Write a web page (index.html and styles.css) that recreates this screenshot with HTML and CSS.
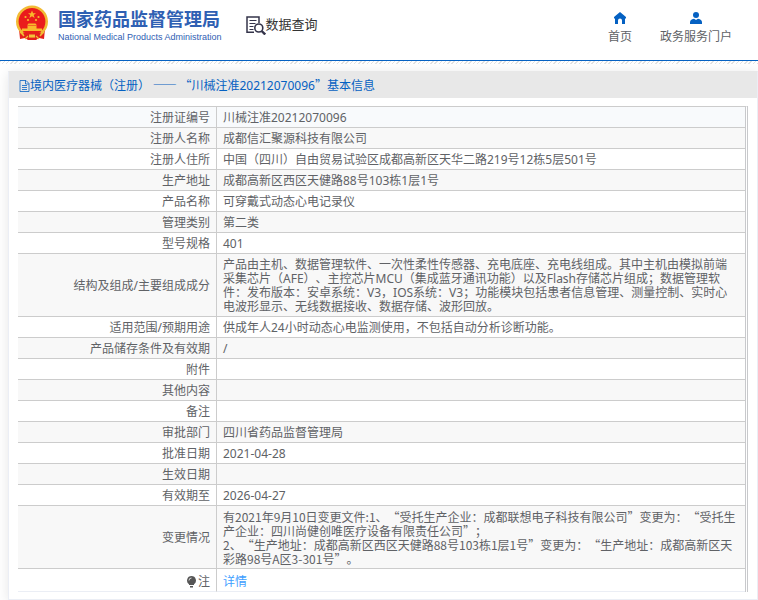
FILE: index.html
```html
<!DOCTYPE html>
<html lang="zh-CN">
<head>
    <meta charset="UTF-8">
    <meta name="viewport" content="width=device-width, initial-scale=1.0">
    <title>国家药品监督管理局数据查询</title>
    <link rel="stylesheet" href="styles.css">
</head>
<body>

<header class="header">
    <a class="logo" href="#">
        <svg class="emblem" viewBox="0 0 34 36" aria-hidden="true">
            <path fill="#e3201b" d="M4 24h26l-1 10-5-1-3 2h-8l-3-2-5 1z"/>
            <circle cx="17" cy="16.500" r="14.700" fill="#ea1c1c" stroke="#f2bb35" stroke-width="2.600"/>
            <path fill="#f9b92c" d="M17 5.500l1.100 2.700h2.900l-2.300 1.800.9 2.900-2.600-1.700-2.600 1.700.9-2.900L13 8.200h2.900z"/>
            <g fill="#f9b92c">
                <circle cx="10.500" cy="12" r="1.100"/>
                <circle cx="13" cy="15" r="1.100"/>
                <circle cx="21" cy="15" r="1.100"/>
                <circle cx="23.500" cy="12" r="1.100"/>
                <path d="M13.500 18.500h7l1.500 2H12zM12.500 21h9v2.500h-9zM7 23.500h20v2.500H7z"/>
            </g>
            <path fill="#e3201b" d="M8 27.500h18l-2 5H10z"/>
            <path fill="none" stroke="#f2bb35" stroke-width="1.200" d="M5 27l4 4M29 27l-4 4M10 34l3-3M24 34l-3-3"/>
            <path fill="#f3c23a" d="M14 29.500h6v3h-6z"/>
        </svg>
        <span class="logo-text">
            <span class="logo-cn">国家药品监督管理局</span>
            <span class="logo-en">National Medical Products Administration</span>
        </span>
    </a>
    <a class="search-link" href="#">
        <svg class="search-icon" viewBox="0 0 20 20" aria-hidden="true">
            <g fill="none" stroke="#34344a">
                <path stroke-width="1.500" d="M8 17.200H1V2h12v6"/>
                <path d="M3.500 5.500h7M3.500 8.500h6M3.500 11.500h4M3.500 14.500h4"/>
                <circle cx="12.800" cy="13" r="4" stroke-width="1.600"/>
                <path stroke-width="2.400" d="M15.700 16l3.500 3.500"/>
            </g>
        </svg>
        <span>数据查询</span>
    </a>
    <nav class="nav">
        <a href="#">
            <svg class="nav-icon" viewBox="0 0 12 12" aria-hidden="true">
                <path fill="#0561c2" d="M6 0l6 5v1.500h-1V12H8V8.500a2 2 0 0 0-4 0V12H1V6.500H0V5z"/>
            </svg>
            <span>首页</span>
        </a>
        <a href="#">
            <svg class="nav-icon" viewBox="0 0 12 12" aria-hidden="true">
                <circle cx="6" cy="3" r="3" fill="#0561c2"/>
                <path fill="#0561c2" d="M0 12V10.500Q0 7.500 4 6.800L6 8l2-1.200q4 .7 4 3.700V12z"/>
            </svg>
            <span>政务服务门户</span>
        </a>
    </nav>
</header>
<div class="stripe"></div>

<main class="panel">
    <h1 class="panel-title">
        <svg class="doc-icon" viewBox="0 0 11 12" aria-hidden="true">
            <path fill="none" stroke="#0561c2" stroke-width=".8" d="M1 .5h6l3 3v8H1zM6.500 .5v3.500H10M3 5.500h5M3 7.500h5M3 9.500h5"/>
        </svg>
        <span>境内医疗器械（注册）<span class="cjk"> —— “</span>川械注准20212070096<span class="cjk">”</span>基本信息</span>
    </h1>
    <div class="panel-body">
        <table class="info">
            <tr><th scope="row">注册证编号</th><td>川械注准20212070096</td></tr>
            <tr><th scope="row">注册人名称</th><td>成都信汇聚源科技有限公司</td></tr>
            <tr><th scope="row">注册人住所</th><td>中国（四川）自由贸易试验区成都高新区天华二路219号12栋5层501号</td></tr>
            <tr><th scope="row">生产地址</th><td>成都高新区西区天健路88号103栋1层1号</td></tr>
            <tr><th scope="row">产品名称</th><td>可穿戴式动态心电记录仪</td></tr>
            <tr><th scope="row">管理类别</th><td>第二类</td></tr>
            <tr><th scope="row">型号规格</th><td>401</td></tr>
            <tr><th scope="row">结构及组成/主要组成成分</th><td>产品由主机、数据管理软件、一次性柔性传感器、充电底座、充电线组成。其中主机由模拟前端<br>采集芯片（AFE）、主控芯片MCU（集成蓝牙通讯功能）以及Flash存储芯片组成；数据管理软件：发布版本：安卓系统：V3，IOS系统：V3；功能模块包括患者信息管理、测量控制、实时心电波形显示、无线数据接收、数据存储、波形回放。</td></tr>
            <tr><th scope="row">适用范围/预期用途</th><td>供成年人24小时动态心电监测使用，不包括自动分析诊断功能。</td></tr>
            <tr><th scope="row">产品储存条件及有效期</th><td>/</td></tr>
            <tr><th scope="row">附件</th><td></td></tr>
            <tr><th scope="row">其他内容</th><td></td></tr>
            <tr><th scope="row">备注</th><td></td></tr>
            <tr><th scope="row">审批部门</th><td>四川省药品监督管理局</td></tr>
            <tr><th scope="row">批准日期</th><td>2021-04-28</td></tr>
            <tr><th scope="row">生效日期</th><td></td></tr>
            <tr><th scope="row">有效期至</th><td>2026-04-27</td></tr>
            <tr><th scope="row">变更情况</th><td class="cjk">有2021年9月10日变更文件:1、“受托生产企业：成都联想电子科技有限公司”变更为：“受托生产企业：四川尚健创唯医疗设备有限责任公司”；<br>2、“生产地址：成都高新区西区天健路88号103栋1层1号”变更为：“生产地址：成都高新区天彩路98号A区3-301号”。</td></tr>
            <tr class="note">
                <th scope="row"><svg class="bulb" viewBox="0 0 9 12" aria-hidden="true"><path fill="#555" d="M4.500 0a4.500 4.500 0 0 1 2.500 8.200V9H2v-.8A4.500 4.500 0 0 1 4.500 0zM3 10h3v1.500H3z"/><path fill="none" stroke="#ddd" d="M2 4.500A2.500 2.500 0 0 1 4.500 2"/></svg>注</th>
                <td><a href="#">详情</a></td>
            </tr>
        </table>
    </div>
</main>

</body>
</html>
```

FILE: styles.css
```css
body {
    margin: 0;
    font-family: "Noto Sans", "Noto Sans CJK SC", sans-serif;
    font-size: 12px;
    line-height: 14px;
    color: #606266;
    background-color: #fff;
    text-spacing-trim: space-all;
}

a {
    text-decoration: none;
}

/* aspas e travessões de largura inteira */
.cjk {
    font-family: "Noto Sans CJK SC", sans-serif;
}

.header {
    display: flex;
    align-items: flex-start;
    height: 60px;
    padding: 0 26px 0 15px;
    border-bottom: 1px solid #0561c2;
}

.logo {
    display: flex;
    gap: 9px;
    padding-top: 5px;
    color: #2f60b3;
}

.emblem {
    width: 34px;
    height: 36px;
}

.logo-text {
    display: flex;
    flex-direction: column;
    padding-top: 2px;
}

.logo-cn {
    font-size: 18px;
    font-weight: bold;
    line-height: 24px;
}

.logo-en {
    font-family: "Liberation Sans", Arial, sans-serif;
    font-size: 9px;
    line-height: 12px;
}

.search-link {
    display: flex;
    align-items: flex-start;
    margin: 15px 0 0 24px;
    font-size: 13px;
    line-height: 18px;
    color: #333;
}

.search-icon {
    width: 20px;
    height: 20px;
}

.nav {
    display: flex;
    gap: 28px;
    margin-left: auto;
    padding-top: 12px;
}

.nav a {
    display: flex;
    flex-direction: column;
    align-items: center;
    gap: 6px;
    color: #606266;
}

.nav-icon {
    width: 12px;
    height: 12px;
}

.stripe {
    height: 3px;
    background: repeating-linear-gradient(135deg, #e2e2e2 0, #e2e2e2 1px, #fff 1px, #fff 3px);
}

.panel {
    margin: 7px 0 0 8px;
    border: 1px solid #ebeef5;
    border-top-color: #e8e8e8;
    box-shadow: 0 2px 12px rgba(0, 0, 0, 0.1);
}

.panel-title {
    display: flex;
    align-items: center;
    margin: 0;
    padding: 7px 10px 5px;
    font-size: 12px;
    font-weight: normal;
    line-height: 14px;
    color: #0561c2;
    background-color: #e8e8e8;
    white-space: pre-wrap;
}

.panel-title .cjk {
    line-height: 10px;
}

.doc-icon {
    width: 11px;
    height: 12px;
}

.panel-body {
    padding: 8px 9px 7px;
}

.info {
    width: 100%;
    border-spacing: 0;
    border-top: 1px solid #ccc;
    border-right: 3px double #c8c9cc;
}

.info th,
.info td {
    padding: 4px 6px 2px;
    border-bottom: 1px solid #ccc;
}

.info th {
    width: 186px;
    font-weight: normal;
    text-align: right;
    border-right: 1px solid #ccc;
}

.info td {
    height: 14px;
    text-align: left;
}

.info tr:nth-child(even) {
    background-color: #f8f8f8;
}

.info tr:first-child {
    background-color: #f8fafc;
}

.info .note th,
.info .note td {
    padding: 6px 6px 2px;
    border-bottom-color: #ebeef5;
}

.note a {
    color: #409eff;
}

.bulb {
    width: 9px;
    height: 12px;
    margin-right: 2px;
    vertical-align: -2px;
}
```
